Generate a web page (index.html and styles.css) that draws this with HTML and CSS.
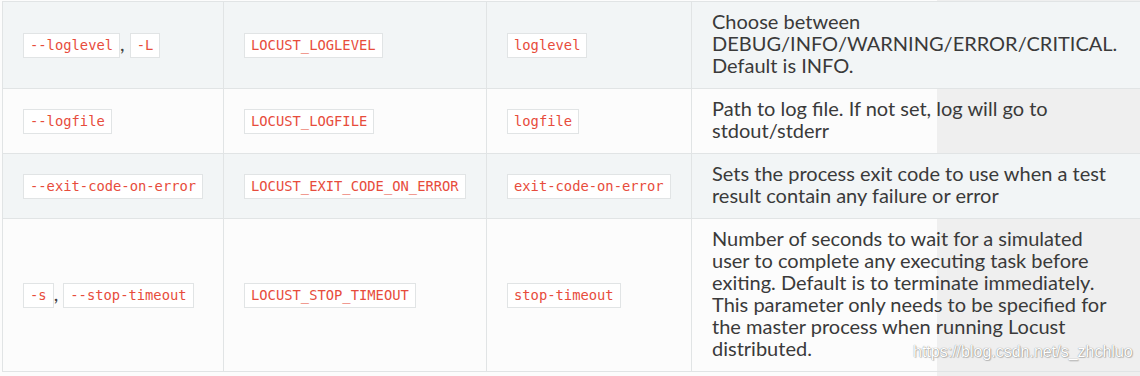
FILE: index.html
```html
<!DOCTYPE html>
<html>
<head>
<meta charset="utf-8">
<link rel="stylesheet" href="styles.css">
</head>
<body>
<div class="page">
  <table class="opts">
    <colgroup>
      <col class="c1"><col class="c2"><col class="c3"><col class="c4">
    </colgroup>
    <tbody>
      <tr class="odd">
        <td class="code-cell"><code>--loglevel</code>, <code>-L</code></td>
        <td class="code-cell"><code>LOCUST_LOGLEVEL</code></td>
        <td class="code-cell"><code>loglevel</code></td>
        <td class="desc">Choose between DEBUG/INFO/WARNING/ERROR/CRITICAL. Default is INFO.</td>
      </tr>
      <tr class="even">
        <td class="code-cell"><code>--logfile</code></td>
        <td class="code-cell"><code>LOCUST_LOGFILE</code></td>
        <td class="code-cell"><code>logfile</code></td>
        <td class="desc">Path to log file. If not set, log will go to stdout/stderr</td>
      </tr>
      <tr class="odd">
        <td class="code-cell"><code>--exit-code-on-error</code></td>
        <td class="code-cell"><code>LOCUST_EXIT_CODE_ON_ERROR</code></td>
        <td class="code-cell"><code>exit-code-on-error</code></td>
        <td class="desc">Sets the process exit code to use when a test result contain any failure or error</td>
      </tr>
      <tr class="even">
        <td class="code-cell"><code>-s</code>, <code>--stop-timeout</code></td>
        <td class="code-cell"><code>LOCUST_STOP_TIMEOUT</code></td>
        <td class="code-cell"><code>stop-timeout</code></td>
        <td class="desc">Number of seconds to wait for a simulated user to complete any executing task before exiting. Default is to terminate immediately. This parameter only needs to be specified for the master process when running Locust distributed.</td>
      </tr>
    </tbody>
  </table>
  <div class="watermark">https://blog.csdn.net/s_zhchluo</div>
</div>
</body>
</html>
```

FILE: styles.css
```css
html, body {
  margin: 0;
  padding: 0;
}

body {
  width: 1140px;
  height: 376px;
  overflow: hidden;
  background: linear-gradient(to right, #fcfcfc 937px, #efefef 937px);
  font-family: Lato, "Noto Sans", sans-serif;
  color: #404040;
}

.page {
  position: relative;
  padding: 1px 0 0 2px;
  height: 375px;
}

.opts {
  border-collapse: collapse;
  table-layout: fixed;
  width: 1138px;
  border: 1px solid #e1e4e5;
}

.c1 { width: 221px; }
.c2 { width: 263px; }
.c3 { width: 205px; }
.c4 { width: 449px; }

.opts td {
  border: 1px solid #e1e4e5;
  padding: 10px 20px;
  vertical-align: middle;
  font-size: 20px;
  line-height: 22px;
}

.opts tr.odd td {
  background: #f2f5f6;
}

.opts tr.even td {
  background: transparent;
}

.code-cell {
  white-space: nowrap;
}

code {
  display: inline-block;
  font-family: "DejaVu Sans Mono", "Liberation Mono", monospace;
  font-size: 13.8px;
  line-height: 23px;
  padding: 0 6px;
  background: #fff;
  border: 1px solid #e1e4e5;
  color: #e74c3c;
  vertical-align: middle;
}

.opts td.desc {
  color: #3a3a3a;
  padding-top: 8px;
  padding-bottom: 12px;
}

.watermark {
  position: absolute;
  left: 913px;
  top: 342px;
  font-family: "Liberation Sans", Arial, sans-serif;
  font-size: 16px;
  line-height: 20px;
  color: #ffffff;
  text-shadow: 0 0 1px rgba(0, 0, 0, 0.55), 1px 1px 1px rgba(0, 0, 0, 0.2);
  white-space: nowrap;
}
```
